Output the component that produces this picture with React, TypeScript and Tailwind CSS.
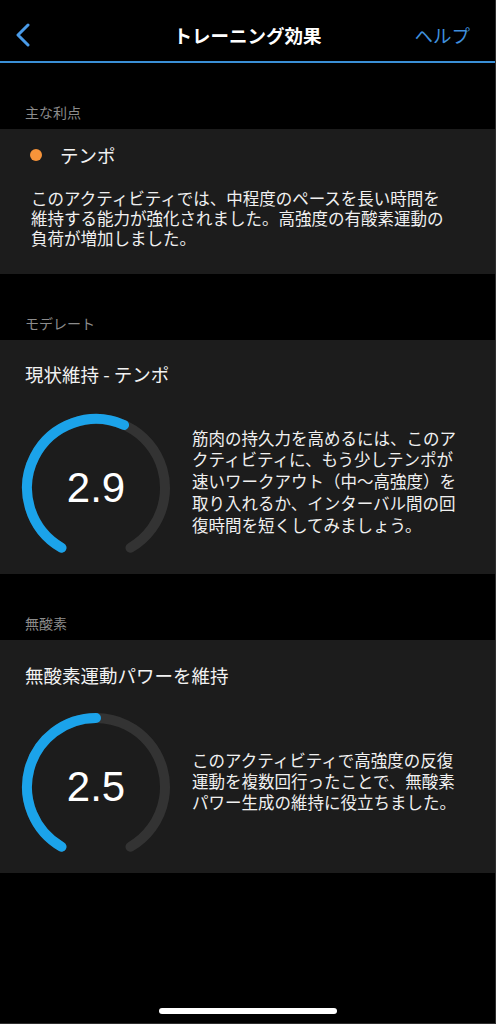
import React from "react";

const FONT = '"Noto Sans CJK JP", "Noto Sans", sans-serif';

function polar(cx: number, cy: number, r: number, deg: number) {
  const a = (deg * Math.PI) / 180;
  return [cx + r * Math.sin(a), cy - r * Math.cos(a)];
}

function arc(cx: number, cy: number, r: number, a1: number, a2: number) {
  const [x1, y1] = polar(cx, cy, r, a1);
  const [x2, y2] = polar(cx, cy, r, a2);
  const large = a2 - a1 > 180 ? 1 : 0;
  return `M ${x1.toFixed(2)} ${y1.toFixed(2)} A ${r} ${r} 0 ${large} 1 ${x2.toFixed(2)} ${y2.toFixed(2)}`;
}

function Gauge({ value }: { value: number }) {
  const start = -150;
  const end = 150;
  const v = start + (value / 5) * 300;
  return (
    <div className="grid w-[150px] h-[150px] shrink-0 place-items-center">
      <svg
        className="col-start-1 row-start-1"
        width="150"
        height="150"
        viewBox="0 0 150 150"
      >
        <path d={arc(75, 75, 69, start, end)} fill="none" stroke="#333333" strokeWidth="10" strokeLinecap="round" />
        <path d={arc(75, 75, 69, start, v)} fill="none" stroke="#1ba3ea" strokeWidth="10" strokeLinecap="round" />
      </svg>
      <span
        className="col-start-1 row-start-1 text-[42px] leading-none text-white"
        style={{ fontFamily: '"Liberation Sans", Arial, sans-serif' }}
      >
        {value.toFixed(1)}
      </span>
    </div>
  );
}

function SectionLabel({ children }: { children: React.ReactNode }) {
  return (
    <div className="px-[25px] pt-[39px] pb-[7px] text-[14px] leading-[20px] text-[#8c8c8c]">
      {children}
    </div>
  );
}

export default function App() {
  return (
    <div
      className="w-[496px] h-[1024px] bg-black flex flex-col border-r border-b border-[#2e2e2e] overflow-hidden"
      style={{ fontFamily: FONT }}
    >
      {/* Header */}
      <div className="h-[61px] pt-[9px] grid grid-cols-[100px_1fr_100px] items-center">
        <div className="pl-[15px] flex items-center">
          <svg width="16" height="24" viewBox="0 0 16 24">
            <path d="M13 2 L3 12 L13 22" fill="none" stroke="#4a9be8" strokeWidth="3" strokeLinecap="round" strokeLinejoin="round" />
          </svg>
        </div>
        <div className="text-center text-white font-bold text-[18.5px] leading-[26px]">
          トレーニング効果
        </div>
        <div className="text-right pr-[25px] text-[#3f8fdc] text-[18.5px] leading-[26px]">
          ヘルプ
        </div>
      </div>
      <div className="h-[2px] bg-[#3a8fd6]" />

      <SectionLabel>主な利点</SectionLabel>
      <div className="bg-[#1c1c1c] pt-[13px] pb-[26px]">
        <div className="flex items-center h-[26px] pl-[30px]">
          <span className="w-[12px] h-[12px] rounded-full bg-[#f7943a]" />
          <span className="ml-[18px] text-[18.5px] leading-[26px] text-[#f2f2f2]">テンポ</span>
        </div>
        <p className="mt-[20px] pl-[31px] text-[16.5px] leading-[20px] text-[#f0f0f0] whitespace-nowrap">
          このアクティビティでは、中程度のペースを長い時間を
          <br />
          維持する能力が強化されました。高強度の有酸素運動の
          <br />
          負荷が増加しました。
        </p>
      </div>

      <SectionLabel>モデレート</SectionLabel>
      <div className="bg-[#1c1c1c] pt-[21px] pb-[11px]">
        <div className="px-[25px] text-[18.5px] leading-[26px] text-[#f2f2f2]">現状維持 - テンポ</div>
        <div className="mt-[26px] pl-[21px] flex items-center">
          <Gauge value={2.9} />
          <p className="ml-[21px] mb-[12px] text-[16.5px] leading-[21.7px] text-[#f0f0f0] whitespace-nowrap">
            筋肉の持久力を高めるには、このア
            <br />
            クティビティに、もう少しテンポが
            <br />
            速いワークアウト（中〜高強度）を
            <br />
            取り入れるか、インターバル間の回
            <br />
            復時間を短くしてみましょう。
          </p>
        </div>
      </div>

      <SectionLabel>無酸素</SectionLabel>
      <div className="bg-[#1c1c1c] pt-[22px] pb-[11px]">
        <div className="px-[25px] text-[18.5px] leading-[26px] text-[#f2f2f2]">無酸素運動パワーを維持</div>
        <div className="mt-[24px] pl-[21px] flex items-center">
          <Gauge value={2.5} />
          <p className="ml-[21px] mb-[12px] text-[16.5px] leading-[21px] text-[#f0f0f0] whitespace-nowrap">
            このアクティビティで高強度の反復
            <br />
            運動を複数回行ったことで、無酸素
            <br />
            パワー生成の維持に役立ちました。
          </p>
        </div>
      </div>

      <div className="flex-1 flex flex-col justify-end items-center pb-[9px]">
        <div className="w-[178px] h-[6px] rounded-full bg-white" />
      </div>
    </div>
  );
}
